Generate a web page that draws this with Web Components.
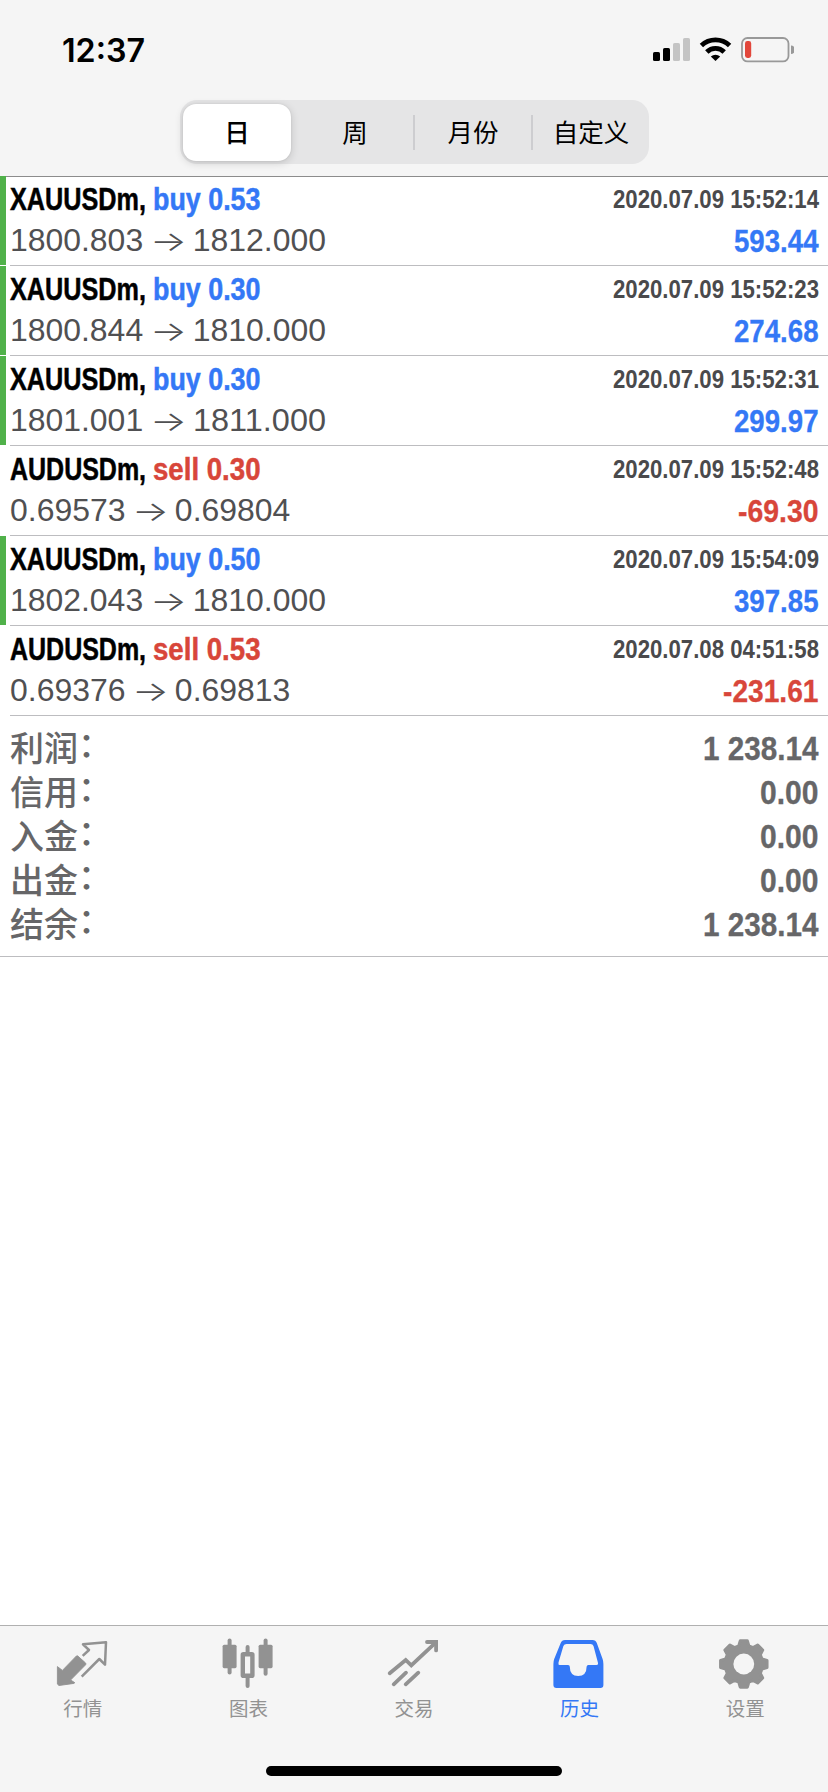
<!DOCTYPE html>
<html lang="zh-CN">
<head>
<meta charset="utf-8">
<title>历史</title>
<style>
html,body{margin:0;padding:0;background:#fff}
body{font-family:"Liberation Sans","Noto Sans CJK SC",sans-serif;color:#000}
</style>
</head>
<body>
<history-app></history-app>
<script>
const define=(name,html,init)=>customElements.define(name,class extends HTMLElement{
  connectedCallback(){
    if(this.shadowRoot)return;
    const t=document.createElement('template');
    t.innerHTML=typeof html==='function'?html(this):html;
    this.attachShadow({mode:'open'}).append(t.content.cloneNode(true));
    if(init)init(this);
  }
});

/* Text condensed horizontally to the advance given in "w". */
define('fit-text',`<style>
:host{display:inline-block;white-space:pre;text-align:left}
span{display:inline-block;transform-origin:0 50%;white-space:pre}
</style><span><slot></slot></span>`,el=>{
  const s=el.shadowRoot.querySelector('span'),w=+el.getAttribute('w');
  const n=s.getBoundingClientRect().width;
  el.style.width=w+'px';
  if(n)s.style.transform=`scaleX(${w/n})`;
});

define('status-bar',`<style>
:host{display:flex;justify-content:space-between;align-items:flex-start;height:100px;padding:0 34px 0 61.5px;box-sizing:border-box}
.t{font:600 32px/40px Inter,sans-serif;margin-top:30.5px}
svg{margin-top:34px;display:block}
</style>
<div class="t"><fit-text w="83">12:37</fit-text></div>
<svg width="142" height="32" viewBox="652 34 142 32">
<rect x="653" y="52" width="7" height="9" rx="1.6"/><rect x="663" y="48" width="7" height="13" rx="1.6"/>
<g fill="#c4c4c4"><rect x="673" y="43" width="7" height="18" rx="1.6"/><rect x="683" y="38" width="7" height="23" rx="1.6"/></g>
<g fill="none" stroke="#000" stroke-width="4.8"><path d="M701.4 45.4a20.6 20.600 0 0 1 28.200 0"/><path d="M706.800 52a12.400 12.400 0 0 1 17.400 0"/></g>
<path d="M710.8 56.6a7 7 0 0 1 9.4 0L715.5 61z"/>
<rect x="742" y="38" width="46.5" height="23.4" rx="5.5" fill="none" stroke="#999" stroke-width="1.8"/>
<rect x="745" y="41" width="6.2" height="17" rx="2.4" fill="#e2473b"/>
<path d="M791 45.5a4.2 4.2 0 0 1 0 8.4z" fill="#999"/>
</svg>`);

define('seg-item',el=>`<style>
:host{display:flex;align-items:center;justify-content:center;position:relative;font:400 25.5px/36px "Noto Sans CJK SC",sans-serif;box-sizing:border-box;height:57px;border-radius:13px;padding-bottom:3px}
:host([on]){background:#fff;box-shadow:0 2px 8px rgba(0,0,0,.16),0 0 2px rgba(0,0,0,.1);font-weight:500}
:host([sep])::after{content:"";position:absolute;right:-6px;top:11px;width:2px;height:35px;background:#cdcdd0}
</style><slot></slot>`);
define('seg-control',`<style>
:host{display:grid;grid-template-columns:repeat(4,108px);gap:10px;width:469px;height:64px;margin:0 auto;padding:3.5px 3.5px;box-sizing:border-box;background:#e5e5e6;border-radius:17px}
</style><slot></slot>`);

define('app-header',`<style>
:host{display:block;height:176px;background:#f5f5f5;box-shadow:0 1px 0 #8c8c8c}
</style><slot></slot>`);

define('deal-row',el=>{
  const a=n=>el.getAttribute(n),buy=a('side')==='buy';
  const c=buy?'#3478f6':'#d8463a';
  return `<style>
:host{display:flex;height:90px;--c:${c}}
.bar{width:6px;height:89px;margin-right:4px;background:${el.hasAttribute('tp')?'#50b14a':'transparent'}}
.body{flex:1;display:grid;grid-template-columns:1fr auto;grid-template-rows:41px 48px;border-bottom:1px solid #bdbdc0;padding-right:9.5px}
.body>div{white-space:pre}
.s,.d,.v{font-family:"Liberation Sans Narrow","Liberation Sans",sans-serif;font-weight:700;white-space:pre}
.s{font-size:32px;line-height:46px;-webkit-text-stroke:.5px}.s b{color:var(--c)}
.d{font-size:26px;line-height:46px;color:#4a4a4c;text-align:right}
.p{font-size:31.5px;line-height:46px;color:#505052}
.ar{font-family:Inter,sans-serif;font-weight:300;font-size:27px;margin:0 -2.5px}
.v{font-size:32px;line-height:48px;color:var(--c);text-align:right;-webkit-text-stroke:.3px}
</style>
<div class="bar"></div>
<div class="body">
<div class="s"><fit-text w="143">${a('sym')}, </fit-text><b><fit-text w="107.5">${a('side')} ${a('lot')}</fit-text></b></div>
<div class="d"><fit-text w="206">${a('time')}</fit-text></div>
<div class="p"><fit-text w="${a('pw')}">${a('from')} </fit-text><fit-text class="ar" w="37">→</fit-text><fit-text w="${a('pw')}"> ${a('to')}</fit-text></div>
<div class="v"><fit-text w="${a('vw')}">${a('val')}</fit-text></div>
</div>`});

define('sum-row',el=>`<style>
:host{display:flex;justify-content:space-between;height:44px;line-height:44px;color:#666668}
.l{font:500 34px/44px "Liberation Sans","Noto Sans CJK SC",sans-serif;padding-top:1px}
.c{display:inline-block;transform:translateY(-4px)}
.v{font:700 33px/44px "Liberation Sans Narrow","Liberation Sans",sans-serif;padding-top:1px;-webkit-text-stroke:.3px}
</style><span class="l">${el.getAttribute('label')}<span class="c">：</span></span><span class="v"><fit-text w="${el.getAttribute('vw')}">${el.getAttribute('val')}</fit-text></span>`);
define('sum-box',`<style>
:host{display:block;height:241px;box-sizing:border-box;padding:10px 9.5px 0 10px;border-bottom:1px solid #bdbdc0}
</style><slot></slot>`);

const gear=()=>{
  const p=[];
  for(let k=0;k<8;k++)for(const [d,r] of [[-.27,18.8],[-.15,23.4],[.15,23.4],[.27,18.8]]){
    const t=k*Math.PI/4+d;p.push((28.8+r*Math.sin(t)).toFixed(2)+' '+(30-r*Math.cos(t)).toFixed(2));
  }
  return `<path d="M${p.join('L')}z" fill="currentColor" stroke="currentColor" stroke-width="3.2" stroke-linejoin="round"/><circle cx="28.8" cy="30" r="10.4" fill="#f5f5f5"/>`;
};
const icons={
quotes:`<g stroke="currentColor" stroke-linejoin="round"><path d="M28.7 42.7L46.3 25l5.7 5.6L53 8.2 30 10.3 36 16l-6.3 5.9" fill="none" stroke-width="2.5"/><path d="M4.4 32.6l5 3.8L23.4 22q.7-.6 1.4 0l7.8 7q.6.9 0 1.8L17.6 46l4.2 2.7-.9.7L6 51.5l-1.6-1.4z" fill="currentColor" stroke-width=".9"/></g>`,
chart:`<g fill="currentColor"><rect x="4.6" y="10.7" width="14" height="23.5" rx="1.6"/><rect x="9.6" y="4.6" width="4" height="36" rx="2"/><rect x="40.6" y="10.7" width="14" height="23.5" rx="1.6"/><rect x="45.6" y="4.6" width="4" height="37.2" rx="2"/><rect x="27.6" y="11" width="4" height="10" rx="2"/><rect x="27.6" y="41" width="4" height="13" rx="2"/></g><rect x="24.8" y="20.2" width="9.6" height="21.6" rx=".6" fill="none" stroke="currentColor" stroke-width="4.4"/>`,
trade:`<g fill="none" stroke="currentColor" stroke-width="3.8" stroke-linecap="round"><path d="M5.7 39.3L21.7 26l5.6 5.4L51.6 8.6M9.7 50.3L22 38.7M21.7 50.3l12.6-11.6"/><path d="M43 8h9.1v8.4"/></g>`,
history:`<path fill="currentColor" fill-rule="evenodd" d="M15 6h27.5q3.2 0 4.3 3L52.6 25q.8 2.2.8 5v21q0 3-3 3h-44q-3 0-3-3V30q0-2.800.8-5L10.700 9Q11.800 6 15 6zM16.500 10q-2.300 0-3.100 2L8.500 28.500Q8 31 9.500 31h8.500q1.800 0 1.800 1.800 0 9.200 8.400 9.200t8.400-9.200q0-1.800 1.800-1.800h8.100q2 0 1.400-2.500L43.500 12q-.700-2-3-2z"/>`,
settings:gear()};
define('tab-item',el=>`<style>
:host{display:flex;flex-direction:column;align-items:center;color:#929292;padding-top:8px}
:host([on]){color:#3478f6}
svg{display:block;width:60px;height:60px}
span{font:400 19.5px/28px "Noto Sans CJK SC",sans-serif}
</style><svg viewBox="0 0 60 60">${icons[el.getAttribute('icon')]}</svg><span><slot></slot></span>`);
define('tab-bar',`<style>
:host{display:flex;flex-direction:column;align-items:center;height:167px;box-sizing:border-box;border-top:1px solid #b0b0b0;background:#f5f5f5}
nav{display:grid;grid-template-columns:repeat(5,1fr);width:100%;height:140px}
i{width:296px;height:10px;border-radius:5px;background:#000}
</style><nav><slot></slot></nav><i></i>`);

define('history-app',`<style>
:host{display:flex;flex-direction:column;width:828px;height:1792px;background:#fff;overflow:hidden}
main{flex:1}
</style>
<app-header><status-bar></status-bar>
<seg-control><seg-item on>日</seg-item><seg-item sep>周</seg-item><seg-item sep>月份</seg-item><seg-item>自定义</seg-item></seg-control></app-header>
<main>
<deal-row tp sym="XAUUSDm" side="buy" lot="0.53" time="2020.07.09 15:52:14" from="1800.803" to="1812.000" val="593.44" pw="142" vw="84.5"></deal-row>
<deal-row tp sym="XAUUSDm" side="buy" lot="0.30" time="2020.07.09 15:52:23" from="1800.844" to="1810.000" val="274.68" pw="142" vw="84.5"></deal-row>
<deal-row tp sym="XAUUSDm" side="buy" lot="0.30" time="2020.07.09 15:52:31" from="1801.001" to="1811.000" val="299.97" pw="142" vw="84.5"></deal-row>
<deal-row sym="AUDUSDm" side="sell" lot="0.30" time="2020.07.09 15:52:48" from="0.69573" to="0.69804" val="-69.30" pw="124.300" vw="80.5"></deal-row>
<deal-row tp sym="XAUUSDm" side="buy" lot="0.50" time="2020.07.09 15:54:09" from="1802.043" to="1810.000" val="397.85" pw="142" vw="84.5"></deal-row>
<deal-row sym="AUDUSDm" side="sell" lot="0.53" time="2020.07.08 04:51:58" from="0.69376" to="0.69813" val="-231.61" pw="124.300" vw="95.5"></deal-row>
<sum-box>
<sum-row label="利润" val="1 238.14" vw="115.5"></sum-row>
<sum-row label="信用" val="0.00" vw="58.5"></sum-row>
<sum-row label="入金" val="0.00" vw="58.5"></sum-row>
<sum-row label="出金" val="0.00" vw="58.5"></sum-row>
<sum-row label="结余" val="1 238.14" vw="115.5"></sum-row>
</sum-box>
</main>
<tab-bar><tab-item icon="quotes">行情</tab-item><tab-item icon="chart">图表</tab-item><tab-item icon="trade">交易</tab-item><tab-item icon="history" on>历史</tab-item><tab-item icon="settings">设置</tab-item></tab-bar>`);
</script>
</body>
</html>
